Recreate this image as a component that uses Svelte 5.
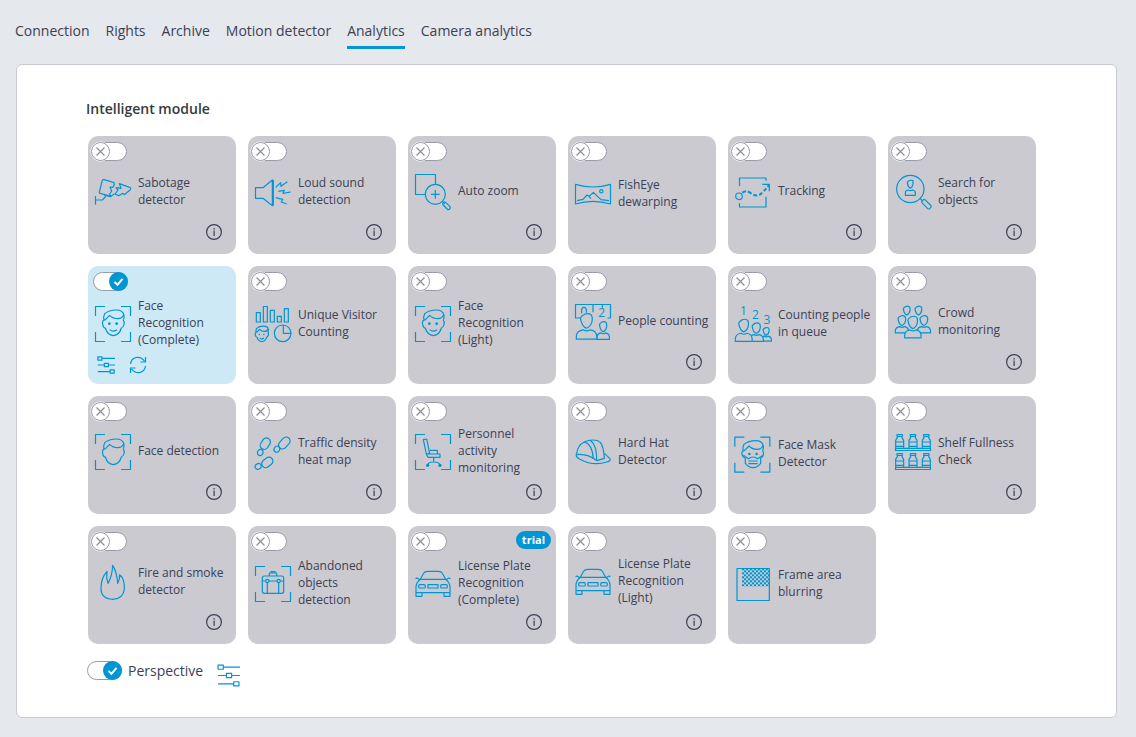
<script>
  const tabs = [
    "Connection",
    "Rights",
    "Archive",
    "Motion detector",
    "Analytics",
    "Camera analytics",
  ];
  let activeTab = $state("Analytics");

  let modules = $state([
    { id: "sabotage", name: "Sabotage detector", info: true },
    { id: "sound", name: "Loud sound detection", info: true },
    { id: "zoom", name: "Auto zoom", info: true },
    { id: "fisheye", name: "FishEye dewarping" },
    { id: "tracking", name: "Tracking", info: true },
    { id: "search", name: "Search for objects", info: true },
    { id: "face-complete", name: "Face Recognition (Complete)", on: true },
    { id: "visitors", name: "Unique Visitor Counting" },
    { id: "face-light", name: "Face Recognition (Light)" },
    { id: "people", name: "People counting", info: true },
    { id: "queue", name: "Counting people in queue" },
    { id: "crowd", name: "Crowd monitoring", info: true },
    { id: "face", name: "Face detection", info: true },
    { id: "traffic", name: "Traffic density heat map", info: true },
    { id: "personnel", name: "Personnel activity monitoring", info: true },
    { id: "hardhat", name: "Hard Hat Detector", info: true },
    { id: "mask", name: "Face Mask Detector" },
    { id: "shelf", name: "Shelf Fullness Check", info: true },
    { id: "fire", name: "Fire and smoke detector", info: true },
    { id: "abandoned", name: "Abandoned objects detection" },
    { id: "plate-complete", name: "License Plate Recognition (Complete)", info: true, trial: true },
    { id: "plate-light", name: "License Plate Recognition (Light)", info: true },
    { id: "blur", name: "Frame area blurring" },
  ]);
  let perspective = $state(true);
</script>

{#snippet knob(on)}
  <svg width="38" height="20" viewBox="0 0 38 20" aria-hidden="true">
    {#if on}
      <rect x="2.5" y="0.5" width="34" height="18" rx="9" fill="#fff" stroke="#9a9ba8" />
      <circle cx="27.5" cy="9.5" r="9.5" fill="#0095d3" />
      <path d="M23.5 10l3 2.800 5-6" fill="none" stroke="#fff" stroke-width="2" />
    {:else}
      <rect x="1.500" y="0.5" width="34" height="18" rx="9" fill="#fff" stroke="#9a9ba8" />
      <circle cx="9.5" cy="9.5" r="10" fill="#fff" />
      <circle cx="9.5" cy="9.5" r="9" fill="#fff" stroke="#9a9ba8" />
      <path d="M5.500 5.500l8 8m0-8l-8 8" fill="none" stroke="#8d8e9a" stroke-width="1.200" />
    {/if}
  </svg>
{/snippet}

{#snippet sliders(size)}
  <svg class="line" width={size} height={size} viewBox="0 0 22 22" aria-hidden="true">
    <path d="M1 1h5v4h-5zM6 3h16M9 9h5v4h-5zM1 11h8M14 11h8M16 17h5v4h-5zM1 19h15" />
  </svg>
{/snippet}

{#snippet corners()}
  <path d="M1.500 30V1.500H30M78 1.500H106.500V30M1.500 78V106.500H30M78 106.500H106.500V78" />
{/snippet}

{#snippet head()}
  <path d="M27 44Q24 32 29 23Q42 12 64 12Q84 12 87 28Q88 36 85 41" />
  <path d="M27 42Q32 42 34 38L44 28Q54 38 68 38Q82 38 86 26" />
  <path d="M27 42Q19 46 25 62Q28 67 31 66Q37 87 55 89Q73 87 79 66Q84 65 87 56Q89 46 84 41" />
{/snippet}

{#snippet smile()}
  <circle class="dot" cx="43" cy="53" r="4" />
  <circle class="dot" cx="65" cy="53" r="4" />
  <path d="M44 71Q54 80 66 71" />
{/snippet}

{#snippet personHead()}
  <path class="solid" d="M12 15Q14 8 24 3Q36-2 44 5Q48 12 47 20Q45 40 30 46Q16 42 12 15Z" />
{/snippet}

{#snippet person()}
  <path class="solid" d="M0 80V70Q1 54 20 51Q30 58 41 51Q59 54 60 70V80Z" />
  {@render personHead()}
{/snippet}

{#snippet bottles()}
  {#each [2, 42, 82] as x}
    <g transform="translate({x} 0)">
      <path d="M4 1.500H20V7H4ZM5 7V11L0 19V43M19 7V11L24 19V43M0 24H24M0 37H24" />
    </g>
  {/each}
  <path d="M1.500 43V49.500H106.500V43Z" />
{/snippet}

{#snippet icon(id)}
  <svg class="line icon" width="36" height="36" viewBox="0 0 108 108" aria-hidden="true">
    {#if id === "sabotage"}
      <path d="M13 54L22 19Q23 16 27 17L55 25Q59 27 58 31L54 40L45 39L50 51L44 60L47 67L16 58Q12 57 13 54Z" />
      <path d="M73 29L106 41Q109 44 105 48L88 62L84 58L71 65L60 60L69 48L63 41L78 43Z" />
      <path d="M1.500 66V92M2 78H22L32 68L28 62M34 64L46 68L58 60" />
    {:else if id === "sound"}
      <path d="M1.500 41H24L52 18V95L24 73H1.500ZM55 18V95" />
      <path d="M62 40L77 26L78 37L97 23M70 52L88 49L84 58L107 54M62 71L83 76L79 84L95 90" />
    {:else if id === "zoom"}
      <path d="M33 61.500H1.500V1.500H61.500V30M48 61H74M61 48V74M82 82L90 90" />
      <circle cx="61" cy="61" r="30" />
      <rect x="82" y="90" width="26" height="11" rx="4" transform="rotate(45 95 95)" />
    {:else if id === "fisheye"}
      <path d="M1.500 25Q54 41 106.500 25V84Q54 68 1.500 84Z" />
      <path d="M6 74L24 70L36 57L42 61L55 49L78 71L102 74M42 61L48 68" />
      <circle cx="79" cy="46" r="5" />
    {:else if id === "tracking"}
      <path d="M13.500 36V12H93V20M13.500 88V99H93V68M82 31H103V52" />
      <circle cx="12" cy="67" r="10" />
      <path class="dashed" d="M22 56Q34 46 48 58Q62 68 74 62Q86 54 102 33" />
    {:else if id === "search"}
      <circle cx="46" cy="45" r="41" />
      <path d="M37 25Q42 16 54 20V30Q53 39 46 43Q38 38 37 25ZM31 64V58Q31 49 39 48Q46 52 53 48Q61 49 61 58V64ZM75 73L83 81" />
      <rect x="78" y="84" width="32" height="13" rx="4" transform="rotate(45 94 91)" />
    {:else if id === "face-complete" || id === "face-light"}
      {@render corners()}
      {@render head()}
      {@render smile()}
    {:else if id === "visitors"}
      <path d="M4 20H16V48H4ZM25 1.500H37V48H25ZM46 13H58V48H46ZM67 31H79V48H67ZM88 8H100V48H88Z" />
      <g transform="translate(-13 53) scale(0.61)">
        {@render head()}
        {@render smile()}
      </g>
      <circle cx="83" cy="82" r="25" />
      <path d="M85 57V82H108" />
    {:else if id === "people"}
      <path d="M16 42H1.500V1.500H106.500V42H98M54 2V25M82 2V11" />
      <path d="M20 28V18Q21 10 27 10Q33 10 34 18V26" />
      <text x="80" y="38">2</text>
      <g transform="translate(66 52) scale(0.62 0.68)">{@render person()}</g>
      <g transform="translate(4 28) scale(1.020 0.970)">{@render person()}</g>
    {:else if id === "queue"}
      <g transform="translate(78 64) scale(0.520)">{@render person()}</g>
      <g transform="translate(43 50) scale(0.7)">{@render person()}</g>
      <g transform="translate(1 39) scale(0.840)">{@render person()}</g>
      <text x="25" y="26">1</text>
      <text x="61" y="40">2</text>
      <text x="96" y="54">3</text>
    {:else if id === "crowd"}
      <g transform="translate(18 6) scale(0.580)">{@render personHead()}</g>
      <g transform="translate(53 6) scale(0.580)">{@render personHead()}</g>
      <g transform="translate(1 34) scale(0.660)">{@render person()}</g>
      <g transform="translate(67 34) scale(0.660)">{@render person()}</g>
      <g transform="translate(29 36) scale(0.820)">{@render person()}</g>
    {:else if id === "face"}
      {@render corners()}
      <g transform="translate(0 3)">{@render head()}</g>
    {:else if id === "traffic"}
      <rect x="19" y="11" width="24" height="36" rx="12" transform="rotate(32 31 29)" />
      <rect x="8" y="46" width="16" height="19" rx="8" transform="rotate(25 16 55)" />
      <rect x="76" y="7" width="24" height="40" rx="12" transform="rotate(42 88 27)" />
      <rect x="58" y="36" width="16" height="19" rx="8" transform="rotate(35 66 45)" />
      <rect x="25" y="67" width="24" height="36" rx="12" transform="rotate(52 37 85)" />
      <rect x="2" y="88" width="16" height="19" rx="8" transform="rotate(60 10 97)" />
    {:else if id === "personnel"}
      {@render corners()}
      <path d="M25 17L35 15L44 58L34 60ZM34 60H75V70H39ZM45 49H67V60M56 70V84M38 92Q40 84 56 84Q72 84 75 92" />
      <circle class="dot" cx="38" cy="94" r="5" />
      <circle class="dot" cx="75" cy="94" r="5" />
    {:else if id === "hardhat"}
      <path d="M5 58Q0 68 12 74Q52 98 96 84Q108 80 105 74L88 58" />
      <path d="M5 58Q8 34 28 24Q40 18 54 18Q68 18 76 25Q86 38 88 73L66 80Q36 58 5 62" />
      <path d="M28 24Q52 30 55 74M46 19Q66 34 65 80" />
    {:else if id === "mask"}
      <g transform="translate(-2 2)">
        {@render corners()}
        <path d="M27 44Q24 32 29 23Q42 12 64 12Q84 12 87 28Q88 36 85 41" />
        <path d="M27 42Q32 42 34 38L44 28Q54 38 68 38Q82 38 86 26" />
        <path d="M27 42Q19 46 25 58Q28 64 33 64V80Q42 92 56 93Q70 92 79 80V64Q86 62 87 54Q89 46 84 41" />
        <path d="M27 56L42 66Q56 56 70 66L86 56M42 73H70M42 81H70" />
        <circle class="dot" cx="45" cy="52" r="4" />
        <circle class="dot" cx="67" cy="52" r="4" />
      </g>
    {:else if id === "shelf"}
      {@render bottles()}
      <g transform="translate(0 57)">{@render bottles()}</g>
    {:else if id === "fire"}
      <path d="M53 106Q17 104 18 72Q18 42 36 22Q33 42 39 58Q52 36 53 4Q66 24 68 58Q75 46 74 32Q89 44 88 74Q86 104 53 106Z" />
    {:else if id === "abandoned"}
      {@render corners()}
      <rect x="22" y="30" width="64" height="52" rx="6" />
      <path d="M43 30V21H65V30M48 21V17H60V21M22 45H32M42 45H66M76 45H86M37 50V82M71 50V82" />
      <circle cx="37" cy="45" r="5" />
      <circle cx="71" cy="45" r="5" />
    {:else if id.startsWith("plate")}
      <path d="M16 40L26 22Q29 16 38 16H70Q79 16 82 22L92 40M1.500 38L6 36L16 42M106.500 38L102 36L92 42" />
      <path d="M16 40H92Q104 50 105 62V91H87V80H21V91H3V62Q4 50 16 40ZM3 80H105" />
      <rect x="11" y="56" width="20" height="10" rx="4" />
      <rect x="77" y="56" width="20" height="10" rx="4" />
      <path d="M39 56H69V66H39Z" />
    {:else if id === "blur"}
      <defs>
        <pattern id="checker" width="12" height="12" patternUnits="userSpaceOnUse" x="21" y="7">
          <path class="fill" d="M0 0H6V6H0ZM6 6H12V12H6Z" />
        </pattern>
      </defs>
      <rect x="6" y="7.500" width="97" height="96" />
      <path class="checks" d="M21 7H103V61H21Z" />
    {/if}
  </svg>
{/snippet}

<nav>
  {#each tabs as tab}
    <a href="#{tab}" class:active={tab === activeTab} onclick={() => (activeTab = tab)}>{tab}</a>
  {/each}
</nav>

<main>
  <h1>Intelligent module</h1>

  <div class="grid">
    {#each modules as m (m.id)}
      <section class="card" class:on={m.on}>
        <div class="top">
          <span class="toggle">
            <input type="checkbox" id={m.id} bind:checked={m.on} />
            {@render knob(m.on)}
          </span>
          {#if m.trial}<span class="trial">trial</span>{/if}
        </div>

        <div class="body">
          {@render icon(m.id)}
          <label for={m.id}>{m.name}</label>
        </div>

        <div class="foot" class:tall={m.info && !m.trial}>
          {#if m.on}
            <button aria-label="Settings">{@render sliders(18)}</button>
            <button aria-label="Refresh">
              <svg class="line" width="18" height="18" viewBox="0 0 18 18" aria-hidden="true">
                <path d="M1.500 8Q2 3 7 1.500Q12 0.500 15.500 5M16.500 1V6H11.500M16.500 10Q16 15 11 16.500Q6 17.500 2.500 13M1.500 17V12H6.500" />
              </svg>
            </button>
          {/if}
          {#if m.info}
            <button class="info" aria-label="Info">
              <svg width="16" height="16" viewBox="0 0 16 16" aria-hidden="true">
                <circle cx="8" cy="8" r="7.400" fill="none" stroke="#3b4155" stroke-width="1.200" />
                <path d="M7.500 4h1.200v1.500h-1.200zM7.500 6.500h1.200v5.500h-1.200z" fill="#3b4155" />
              </svg>
            </button>
          {/if}
        </div>
      </section>
    {/each}
  </div>

  <div class="perspective">
    <span class="toggle">
      <input type="checkbox" id="perspective" bind:checked={perspective} />
      {@render knob(perspective)}
    </span>
    <label for="perspective">Perspective</label>
    <button aria-label="Perspective settings">{@render sliders(23)}</button>
  </div>
</main>

<style>
  :global(body) {
    background: #e5e8ed;
    color: #3b4155;
    font-family: "Open Sans", "Noto Sans", sans-serif;
    font-size: 14px;
  }
  nav {
    display: flex;
    gap: 16px;
    padding: 20px 15px 15px;
  }
  nav a {
    padding-bottom: 4px;
    border-bottom: 3px solid transparent;
    line-height: 22px;
    color: inherit;
    text-decoration: none;
  }
  nav a.active {
    border-color: #0095d3;
  }
  main {
    margin: 0 19px 19px 16px;
    padding: 34px 69px 26px;
    background: #fff;
    border: 1px solid #c9cad0;
    border-radius: 6px;
  }
  h1 {
    margin: 0 0 17px;
    font-size: 14px;
    font-weight: 600;
    line-height: 20px;
    color: #333b3b;
  }
  .grid {
    display: grid;
    grid-template-columns: repeat(auto-fill, 148px);
    gap: 12px;
    padding-left: 2px;
  }
  .card {
    --bg: #cbcad0;
    display: flex;
    flex-direction: column;
    height: 118px;
    background: var(--bg);
    border-radius: 10px;
  }
  .card.on {
    --bg: #cce9f5;
  }
  .top {
    display: flex;
    justify-content: space-between;
    height: 24px;
    padding: 6px 5px 0 3px;
  }
  .toggle {
    position: relative;
    width: 38px;
    height: 20px;
  }
  .toggle input {
    position: absolute;
    inset: 0;
    width: 100%;
    height: 100%;
    margin: 0;
    opacity: 0;
    cursor: pointer;
  }
  svg {
    display: block;
    overflow: visible;
  }
  .trial {
    height: 18px;
    margin-top: -1px;
    padding: 0 6px;
    border-radius: 9px;
    background: #0095d3;
    color: #fff;
    font-size: 11px;
    font-weight: 700;
    line-height: 18px;
  }
  .body {
    flex: 1;
    display: flex;
    align-items: center;
    gap: 7px;
    min-height: 0;
    padding: 0 5px 0 7px;
  }
  .icon {
    flex: none;
  }
  .body label {
    padding-bottom: 3px;
    font-size: 12px;
    line-height: normal;
  }
  .foot {
    display: flex;
    align-items: flex-end;
    gap: 14px;
    height: 22px;
    padding: 0 10px 10px 9px;
  }
  .foot.tall {
    height: 26px;
  }
  .info {
    margin: 0 4px 4px auto;
  }
  button {
    padding: 0;
    border: 0;
    background: none;
    cursor: pointer;
  }
  .line {
    fill: none;
    stroke: #0095d3;
    stroke-width: 1.2px;
    stroke-linejoin: round;
  }
  .line :is(path, rect, circle) {
    vector-effect: non-scaling-stroke;
  }
  .line .solid {
    fill: var(--bg);
  }
  .line .dot,
  .line .fill {
    fill: #0095d3;
    stroke: none;
  }
  .line .checks {
    fill: url(#checker);
    stroke: none;
  }
  .line .dashed {
    stroke-width: 2px;
    stroke-dasharray: 4px 2px;
  }
  .line text {
    fill: #0095d3;
    stroke: none;
    font-size: 36px;
    text-anchor: middle;
  }
  .perspective {
    display: flex;
    align-items: center;
    height: 32px;
    margin-top: 15px;
    margin-left: -1px;
  }
  .perspective .toggle {
    margin-bottom: 8px;
  }
  .perspective label {
    margin: 0 14px 10px 5px;
  }
</style>
